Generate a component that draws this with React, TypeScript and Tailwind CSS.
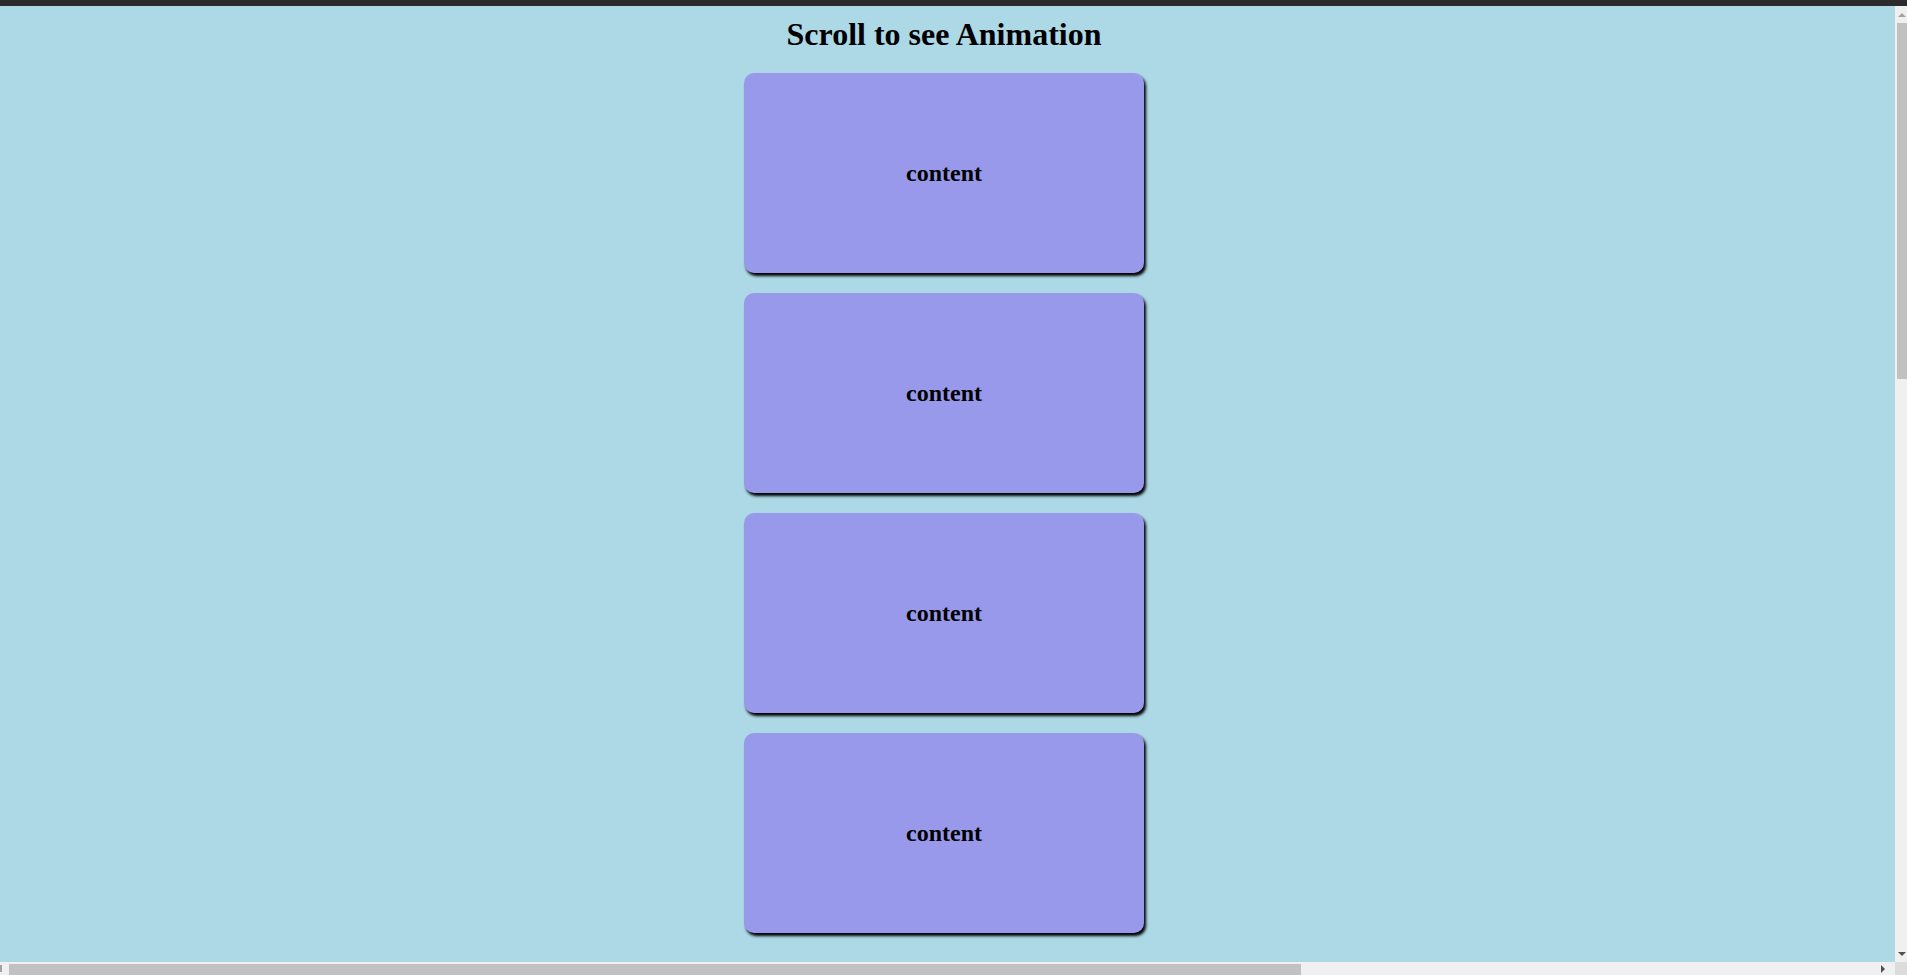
import React from "react";

function Card() {
  return (
    <div className="w-[400px] h-[200px] shrink-0 rounded-[10px] bg-[#9999eb] shadow-[2px_3px_3px_#000] flex items-center justify-center">
      <h2 className="text-[24px] leading-[28px] font-bold text-black">content</h2>
    </div>
  );
}

export default function App() {
  return (
    <div className="w-[1907px] h-[975px] flex flex-col overflow-hidden bg-[#add8e6] font-['Liberation_Serif','Times_New_Roman',serif]">
      <div className="h-[6px] shrink-0 bg-[#2b2b2b]" />
      <div className="flex flex-1 min-h-0">
        <div className="flex-1 min-w-0 overflow-hidden">
          <div className="w-[1888px] flex flex-col items-center pt-[10px]">
            <h1 className="text-[32px] leading-[36px] font-bold text-black mb-[21px]">Scroll to see Animation</h1>
            <div className="flex flex-col items-center gap-[20px]">
              <Card />
              <Card />
              <Card />
              <Card />
            </div>
          </div>
        </div>
        <div className="w-[12px] shrink-0 bg-[#f0f0f0] flex flex-col items-end relative">
          <div className="h-[17px] w-full flex items-center justify-end pr-[1px]">
            <div className="w-0 h-0 border-l-[4px] border-r-[4px] border-b-[4px] border-l-transparent border-r-transparent border-b-[#a3a3a3]" />
          </div>
          <div className="w-[10px] h-[356px] bg-[#c1c1c1]" />
          <div className="flex-1" />
          <div className="h-[17px] w-full flex items-center justify-end pr-[1px]">
            <div className="w-0 h-0 border-l-[4px] border-r-[4px] border-t-[4px] border-l-transparent border-r-transparent border-t-[#505050]" />
          </div>
        </div>
      </div>
      <div className="h-[13px] shrink-0 flex bg-[#f0f0f0]">
        <div className="flex-1 flex items-end">
          <div className="w-[9px] h-full flex items-center">
            <div className="w-[2px] h-[7px] bg-[#a3a3a3]" />
          </div>
          <div className="w-[1292px] h-[11px] bg-[#c1c1c1]" />
          <div className="flex-1" />
          <div className="w-[14px] h-full flex items-center">
            <div className="w-0 h-0 border-t-[4px] border-b-[4px] border-l-[4px] border-t-transparent border-b-transparent border-l-[#505050]" />
          </div>
        </div>
        <div className="w-[12px] h-full bg-[#dcdcdc]" />
      </div>
    </div>
  );
}
